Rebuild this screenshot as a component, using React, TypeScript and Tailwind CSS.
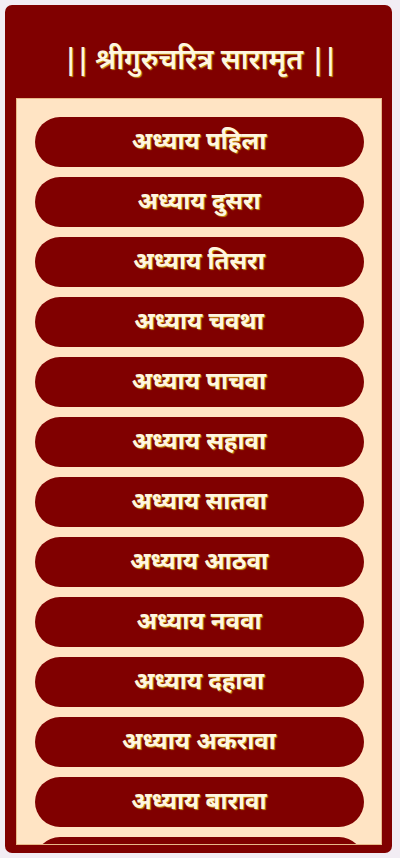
import React from "react";

const chapters = [
  "अध्याय पहिला",
  "अध्याय दुसरा",
  "अध्याय तिसरा",
  "अध्याय चवथा",
  "अध्याय पाचवा",
  "अध्याय सहावा",
  "अध्याय सातवा",
  "अध्याय आठवा",
  "अध्याय नववा",
  "अध्याय दहावा",
  "अध्याय अकरावा",
  "अध्याय बारावा",
  "अध्याय तेरावा",
];

export default function App() {
  return (
    <div className="w-[400px] h-[858px] bg-[#f2edf4] pt-[5px] pl-[5px] overflow-hidden [font-family:'Noto_Sans','Liberation_Sans',sans-serif]">
      <div className="w-[387px] h-[848px] bg-[#800000] rounded-[7px] pl-[11px] pr-[10px] pb-[8px] flex flex-col">
        <div className="h-[93px] shrink-0 flex items-center justify-center pt-[12px]">
          <h1 className="text-[28px] font-semibold text-[#fff6e0] [text-shadow:1px_1px_1px_#c99a10] leading-none whitespace-nowrap">
            <span className="tracking-[-3px]">||</span> श्रीगुरुचरित्र सारामृत <span className="tracking-[-3px]">||</span>
          </h1>
        </div>
        <div className="flex-1 bg-[#ffe4c4] border border-[#e8b888] overflow-hidden pt-[18px]">
          <div className="flex flex-col items-center gap-[10px]">
            {chapters.map((c) => (
              <button
                key={c}
                className="w-[329px] h-[50px] shrink-0 rounded-full bg-[#800000] text-[#fff6e0] text-[24px] font-bold [text-shadow:1px_1px_1px_#c99a10] flex items-center justify-center leading-none pb-[4px]"
              >
                {c}
              </button>
            ))}
          </div>
        </div>
      </div>
    </div>
  );
}
